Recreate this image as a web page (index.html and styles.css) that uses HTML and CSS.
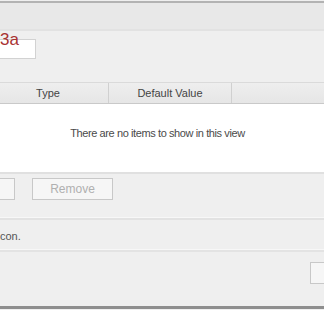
FILE: index.html
```html
<!DOCTYPE html>
<html>
    <head>
        <link rel="stylesheet" href="styles.css">
    </head>
    <body>
        <div class="window">
            <div class="titlebar"></div>
            <div class="name">3a</div>
            <input class="name-input" type="text">
            <div class="grid">
                <div class="grid-head">
                    <div class="col col-type">Type</div>
                    <div class="col col-default">Default Value</div>
                    <div class="col col-rest"></div>
                </div>
                <div class="grid-body">There are no items to show in this view</div>
            </div>
            <div class="toolbar">
                <button class="btn btn-add"></button>
                <button class="btn" disabled>Remove</button>
            </div>
            <div class="note">con.</div>
            <div class="footer">
                <button class="btn btn-ok"></button>
            </div>
        </div>
    </body>
</html>
```

FILE: styles.css
```css
body{
    margin: 0;
    padding-top: 1px;
    background-color: #efefef;
    font-family: "Liberation Sans", Arial, sans-serif;
    font-size: 11px;
    overflow: hidden;
}
.window{
    overflow: hidden;
    border-top: 2px solid #b3b3b3;
    border-bottom: 3px solid #8e8e8e;
}
.titlebar{
    height: 26px;
    background-color: #e8e8e8;
    border-bottom: 2px solid #e2e2e2;
}
.name{
    margin-top: 1px;
    font-size: 17px;
    line-height: 16px;
    height: 16px;
    color: #a83232;
}
.name-input{
    display: block;
    box-sizing: border-box;
    margin: -9px 0 0 -40px;
    width: 76px;
    height: 20px;
    padding: 0;
    border: 1px solid #d2d2d2;
    background-color: #ffffff;
}
.grid{
    margin-top: 23px;
    margin-left: -12px;
    width: 339px;
}
.grid-head{
    display: flex;
    height: 20px;
    border-top: 1px solid #dadada;
    border-bottom: 1px solid #c9c9c9;
    background: linear-gradient(#eeeeee, #e6e6e6);
    color: #444444;
    line-height: 21px;
}
.col{
    text-align: center;
    border-right: 1px solid #d0d0d0;
    box-sizing: border-box;
}
.col-type{
    width: 121px;
}
.col-default{
    width: 123px;
}
.col-rest{
    flex: 1;
    border-right: none;
}
.grid-body{
    height: 68px;
    box-sizing: border-box;
    padding-top: 22px;
    line-height: 14px;
    letter-spacing: -0.4px;
    background-color: #ffffff;
    text-align: center;
    color: #4a4a4a;
}
.toolbar{
    display: flex;
    gap: 17px;
    padding: 4px 0 17px 0;
    border-top: 2px solid #e0e0e0;
    border-bottom: 1px solid #f7f7f7;
}
.btn{
    box-sizing: border-box;
    width: 81px;
    height: 22px;
    padding: 0;
    border: 1px solid #c8c8c8;
    background-color: #f6f6f6;
    color: #b0b0b0;
    font-family: "Liberation Sans", Arial, sans-serif;
    font-size: 12px;
}
.btn-add{
    width: 60px;
    margin-left: -45px;
}
.note{
    padding: 9px 0 6px 0;
    line-height: 14px;
    color: #555555;
    border-top: 2px solid #e2e2e2;
    border-bottom: 1px solid #f7f7f7;
}
.footer{
    display: flex;
    justify-content: flex-end;
    padding: 10px 0 22px 0;
    border-top: 2px solid #e3e3e3;
}
.btn-ok{
    width: 60px;
    margin-right: -46px;
}
```
